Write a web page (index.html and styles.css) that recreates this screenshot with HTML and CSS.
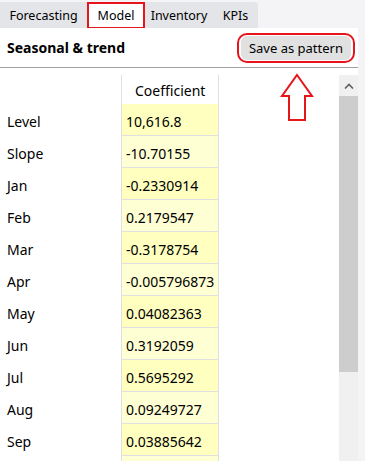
FILE: index.html
```html
<!DOCTYPE html>
<html lang="en">
<head>
    <meta charset="UTF-8">
    <meta name="viewport" content="width=device-width, initial-scale=1.0">
    <title>Seasonal &amp; trend</title>
    <link rel="stylesheet" href="styles.css">
</head>
<body>
    <nav class="tabs">
        <span class="tab tab-forecast">Forecasting</span>
        <span class="tab tab-model tab-active">Model</span>
        <span class="tab tab-inventory">Inventory</span>
        <span class="tab tab-kpis">KPIs</span>
    </nav>

    <main class="panel">
        <div class="panel-header">
            <h3>Seasonal &amp; trend</h3>
            <div class="highlight">
                <button class="save-button">Save as pattern</button>
            </div>
        </div>

        <div class="grid-area">
            <table class="coef-table">
                <thead>
                    <tr><th></th><th class="coef">Coefficient</th></tr>
                </thead>
                <tbody>
                    <tr><td>Level</td><td class="coef">10,616.8</td></tr>
                    <tr><td>Slope</td><td class="coef">-10.70155</td></tr>
                    <tr><td>Jan</td><td class="coef">-0.2330914</td></tr>
                    <tr><td>Feb</td><td class="coef">0.2179547</td></tr>
                    <tr><td>Mar</td><td class="coef">-0.3178754</td></tr>
                    <tr><td>Apr</td><td class="coef">-0.005796873</td></tr>
                    <tr><td>May</td><td class="coef">0.04082363</td></tr>
                    <tr><td>Jun</td><td class="coef">0.3192059</td></tr>
                    <tr><td>Jul</td><td class="coef">0.5695292</td></tr>
                    <tr><td>Aug</td><td class="coef">0.09249727</td></tr>
                    <tr><td>Sep</td><td class="coef">0.03885642</td></tr>
                    <tr><td></td><td class="coef"></td></tr>
                </tbody>
            </table>

            <div class="scrollbar">
                <div class="scroll-up">
                    <svg width="10" height="6" viewBox="0 0 10 6"><path d="M1 5.5 L5 1.5 L9 5.5" fill="none" stroke="#606060" stroke-width="1.6"/></svg>
                </div>
                <div class="scroll-thumb"></div>
            </div>
        </div>

        <svg class="arrow" width="36" height="50" viewBox="0 0 36 50">
            <path d="M18 2 L33 23 L26 23 L26 47 L10 47 L10 23 L3 23 Z" fill="none" stroke="#e8141c" stroke-width="2"/>
        </svg>
    </main>
</body>
</html>
```

FILE: styles.css
```css
body {
    font-family: "Noto Sans", "Open Sans", sans-serif;
    margin: 0;
    padding: 0;
    background-color: #f4f4f6;
    color: #000;
    height: 461px;
    overflow: hidden;
}

.tabs {
    display: flex;
    width: 258px;
    height: 26px;
    margin-top: 2px;
    background-color: #e3e5e8;
    border-top-right-radius: 4px;
    font-size: 12.5px;
}

.tab {
    display: flex;
    align-items: center;
    justify-content: center;
    box-sizing: border-box;
}

.tab-forecast {
    width: 87px;
}

.tab-model {
    width: 58px;
}

.tab-inventory {
    width: 68px;
}

.tab-kpis {
    width: 45px;
}

.tab-active {
    background-color: #fff;
    border: 2px solid #e8141c;
    height: 27px;
}

.panel {
    position: relative;
    width: 358px;
    height: 433px;
    background-color: #fff;
    overflow: hidden;
}

.panel-header {
    display: flex;
    align-items: center;
    justify-content: space-between;
    height: 39px;
    padding: 0 3px 0 7px;
    border-bottom: 1px solid #a0a0a0;
}

.panel-header h3 {
    margin: 0;
    font-size: 14px;
    font-weight: bold;
}

.highlight {
    border: 2px solid #e8141c;
    border-radius: 10px;
    padding: 1px 2px;
}

.save-button {
    font-family: inherit;
    font-size: 13px;
    background-color: #e1e1e1;
    border: none;
    border-radius: 6px;
    padding: 3px 8px;
    height: 24px;
    color: #000;
}

.grid-area {
    display: flex;
    justify-content: space-between;
    padding-top: 7px;
}

.coef-table {
    border-collapse: collapse;
    font-size: 14px;
    align-self: flex-start;
}

.coef-table th,
.coef-table td {
    padding: 3px 4px 0 7px;
    height: 28px;
    text-align: left;
    font-weight: normal;
    white-space: nowrap;
}

.coef-table th {
    height: 27px;
    padding-top: 2px;
}

.coef-table td:first-child {
    width: 110px;
}

.coef-table .coef {
    width: 87px;
    padding-left: 4px;
    border-left: 1px solid #e0e0e0;
    border-right: 1px solid #e0e0e0;
    border-bottom: 1px solid #e0e0e0;
}

.coef-table th.coef {
    text-align: center;
    border-bottom: none;
}

.coef-table tbody tr:nth-child(odd) .coef {
    background-color: #ffffc0;
}

.coef-table tbody tr:nth-child(even) .coef {
    background-color: #ffffd4;
}

.scrollbar {
    width: 19px;
    height: 386px;
    background-color: #f0f0f0;
}

.scroll-up {
    display: flex;
    align-items: center;
    justify-content: center;
    height: 21px;
}

.scroll-thumb {
    height: 276px;
    background-color: #cdcdcd;
}

.arrow {
    position: absolute;
    left: 279px;
    top: 45px;
}
```
